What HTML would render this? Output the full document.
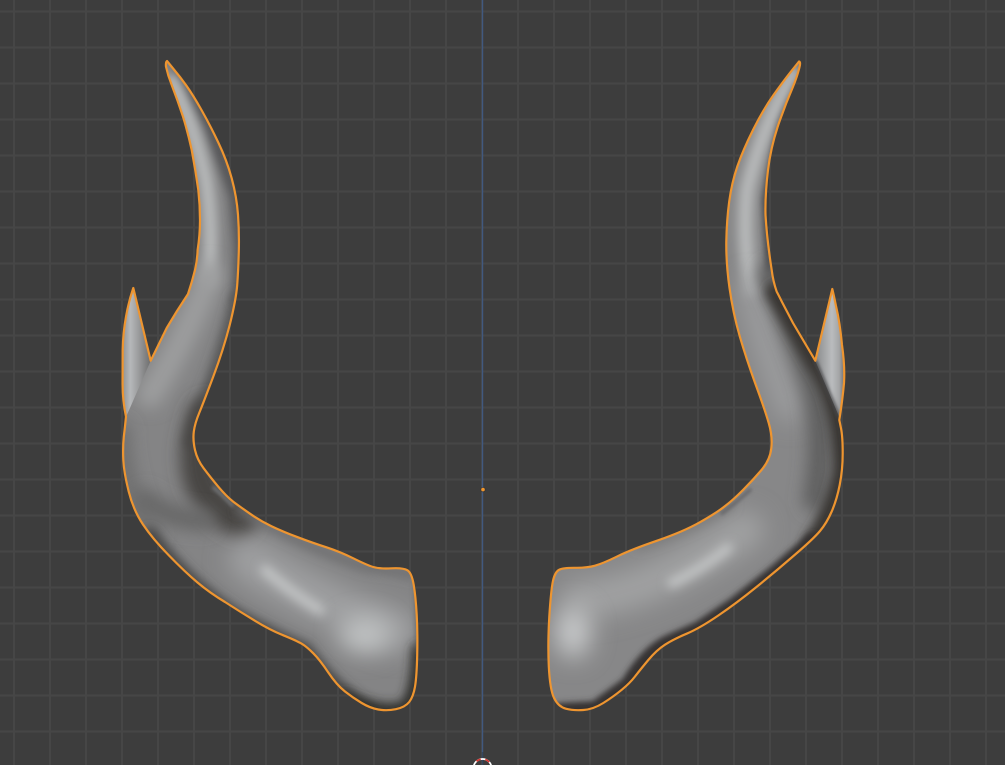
<!DOCTYPE html>
<html lang="en">
<head>
<meta charset="utf-8">
<title>Horns viewport</title>
<style>
html,body{margin:0;padding:0;width:1005px;height:765px;overflow:hidden;background:#3d3d3d}
svg{display:block}
</style>
</head>
<body>
<svg xmlns="http://www.w3.org/2000/svg" width="1005" height="765" viewBox="0 0 1005 765">
<defs>
<filter id="b1" filterUnits="userSpaceOnUse" x="0" y="0" width="1005" height="765"><feGaussianBlur stdDeviation="1.5"/></filter>
<filter id="b3" filterUnits="userSpaceOnUse" x="0" y="0" width="1005" height="765"><feGaussianBlur stdDeviation="3"/></filter>
<filter id="b5" filterUnits="userSpaceOnUse" x="0" y="0" width="1005" height="765"><feGaussianBlur stdDeviation="5"/></filter>
<filter id="b8" filterUnits="userSpaceOnUse" x="0" y="0" width="1005" height="765"><feGaussianBlur stdDeviation="8"/></filter>
<filter id="b12" filterUnits="userSpaceOnUse" x="0" y="0" width="1005" height="765"><feGaussianBlur stdDeviation="12"/></filter>
<pattern id="grid" width="36" height="36" patternUnits="userSpaceOnUse" x="13" y="10.5">
<rect x="0" y="0" width="2" height="36" fill="#464646"/>
<rect x="0" y="0" width="36" height="2" fill="#464646"/>
</pattern>
<path id="L" d="M167 61L173.5 69Q180 76.7 186.5 85.8Q193 95 201.5 110Q210 125 218.3 142.5Q226.7 160 231.7 178.3Q236.7 196.7 238 214.8Q239.3 233 238.8 251.5Q238.3 270 237.2 285Q236 300 229.7 325Q223.3 350 213.3 376.5Q203.3 403 199.2 413Q195 423 193.8 431.5Q192.7 440 195 450Q197.3 460 203.7 468.3Q210 476.7 218.3 486.7Q226.7 496.7 233.3 501.7Q240 506.7 250 513.7Q260 520.7 271.5 526.2Q283 531.7 298 537.3Q313 543 326.5 547.3Q340 551.7 353.3 558.3Q366.7 565 373.3 567Q380 569 391.7 568.3Q403.3 567.7 407.5 570.3Q411.7 573 413.7 584.8Q415.7 596.7 416.7 614.8Q417.7 633 417.2 654.8Q416.7 676.7 415 686.7Q413.3 696.7 409.2 702Q405 707.3 395.8 709.2Q386.7 711 378.3 709.5Q370 708 361.7 703Q353.3 698 345 691.5Q336.7 685 328.3 672.5Q320 660 313.3 653.3Q306.7 646.7 301.7 643.7Q296.7 640.7 283.3 635.3Q270 630 255 620.8Q240 611.7 225 602Q210 593 197.5 582.5Q185 572 169 555.5Q152.7 539 143 524.5Q133.3 510 128.7 491.5Q124 473 123.3 460Q122.7 446.7 123.8 436.7Q125 426.7 126 416.7Q122.5 400 122.6 383Q122.7 366 122.7 350Q123 333 126 316.7Q128.5 302 133.3 288L150.7 360.7L166.7 328L177 311L188 294Q192 282 195 270Q197.3 260 197.6 250Q200 235 200 220Q200 205 198.3 190Q195.5 170 191.7 150Q188 133 183 116.7Q177.5 100 171.7 85Q168 76 166 66.7Q165.5 62 167 61Z"/>
<path id="R" d="M799 61.5L791 71.6Q783 81.7 773 95.8Q763 110 753 130Q743 150 737.3 166.5Q731.7 183 729.2 201.5Q726.7 220 726.3 241.5Q726 263 729.5 288Q733 313 739.8 336.5Q746.7 360 755.8 385Q765 410 768.8 423.3Q772.7 436.7 771.3 448.3Q770 460 761.5 470Q753 480 743 490Q733 500 724.8 506.3Q716.7 512.7 700 522.2Q683.3 531.7 656.7 540.8Q630 550 616.7 556.7Q603.3 563.3 595 565.7Q586.7 568 575 567.8Q563.3 567.7 559.2 569.7Q555 571.7 553 580.8Q551 590 549.3 616.5Q547.7 643 548.8 666.5Q550 690 554.2 698.3Q558.3 706.7 565.8 708.7Q573.3 710.7 583.3 710Q593.3 709.3 603.3 703Q613.3 696.7 621.7 689.8Q630 683 635 676.5Q640 670 648.3 660Q656.7 650 665 644.7Q673.3 639.3 686.7 633.7Q700 628 718.3 615.5Q736.7 603 755.8 587.5Q775 572 794 555.5Q813.3 539 820 531Q826.7 523 831.7 511.5Q836.7 500 839.7 485Q842.7 470 842.7 453.3Q842.7 436.7 841 428.3L839.3 420Q842.5 400 844 383Q845 366 842 345Q840 323 836 306Q834 296 832.3 289L815.3 360.7L793 323L782 302Q777.5 293 776.7 291.7Q773 281 771.7 270Q767 240 765.5 215Q765 195 768 170Q771 145 780 120Q786 103 793 86.7Q797 77 799.3 68Q801 62 799 61.5Z"/>
<clipPath id="cL"><use href="#L"/></clipPath>
<clipPath id="cR"><use href="#R"/></clipPath>
<linearGradient id="spL" gradientUnits="userSpaceOnUse" x1="122" y1="0" x2="150" y2="0">
<stop offset="0" stop-color="#8f9091"/><stop offset=".3" stop-color="#b6b8ba"/><stop offset=".6" stop-color="#9a9b9c"/><stop offset="1" stop-color="#707071"/>
</linearGradient>
<linearGradient id="spR" gradientUnits="userSpaceOnUse" x1="816" y1="0" x2="845" y2="0">
<stop offset="0" stop-color="#8b8c8d"/><stop offset=".55" stop-color="#babcbe"/><stop offset=".8" stop-color="#a4a5a6"/><stop offset="1" stop-color="#6c6c6d"/>
</linearGradient>
</defs>

<rect width="1005" height="765" fill="#3d3d3d"/>
<rect width="1005" height="765" fill="url(#grid)"/>

<!-- axis line -->
<rect x="481.8" y="0" width="1.4" height="752" fill="#41597f"/>
<rect x="481.8" y="752" width="1.4" height="13" fill="#34465f"/>

<!-- left horn -->
<g clip-path="url(#cL)">
<rect x="110" y="50" width="320" height="670" fill="#848485"/>
<g fill="none" stroke-linecap="round" stroke-linejoin="round">
<path d="M178 72L210 125L236 196L241 250L238 300" stroke="#505051" stroke-width="12" filter="url(#b5)"/>
<path d="M172 80Q194 125 206 180Q214 235 208 280" stroke="#b7b9ba" stroke-width="14" filter="url(#b5)"/>
<path d="M210 275Q185 340 150 395" stroke="#9c9d9e" stroke-width="26" filter="url(#b8)"/>
<path d="M238 300Q226 350 206 400Q195 424 192 442" stroke="#555555" stroke-width="16" filter="url(#b5)"/>
<path d="M206 415Q192 455 203 485Q218 510 240 520" stroke="#474442" stroke-width="36" filter="url(#b8)"/>
<path d="M122 430Q122 485 152 535" stroke="#6d6d6d" stroke-width="16" filter="url(#b8)"/>
<path d="M145 500Q170 520 205 520" stroke="#686868" stroke-width="22" filter="url(#b8)"/>
<path d="M250 560Q320 605 395 630" stroke="#9e9fa0" stroke-width="44" filter="url(#b12)"/>
<path d="M240 510Q300 545 365 567Q395 570 414 575" stroke="#6c6c6d" stroke-width="8" filter="url(#b5)"/>
<path d="M150 535Q190 588 240 618Q280 640 305 650Q335 690 370 713" stroke="#444444" stroke-width="15" filter="url(#b5)"/>
<path d="M345 698Q380 716 406 708Q418 692 419 650" stroke="#2f2e2c" stroke-width="15" filter="url(#b5)"/>
<path d="M419 585L420 650" stroke="#5c5c5c" stroke-width="7" filter="url(#b3)"/>
<path d="M265 570Q290 592 320 610" stroke="#c2c4c5" stroke-width="10" filter="url(#b5)"/>
<ellipse cx="365" cy="635" rx="26" ry="18" fill="#c0c2c3" stroke="none" filter="url(#b12)"/>
<path d="M232 505L222 495L214 488" stroke="#6c6d70" stroke-width="4" filter="url(#b1)"/>
</g>
<path d="M133.3 288L150.7 360.7L126 417L120 383L120 350L126 316Z" fill="url(#spL)"/>
</g>
<use href="#L" fill="none" stroke="#ee9530" stroke-width="2.2" stroke-linejoin="round"/>

<!-- right horn -->
<g clip-path="url(#cR)">
<rect x="540" y="50" width="320" height="670" fill="#878788"/>
<g fill="none" stroke-linecap="round" stroke-linejoin="round">
<path d="M799 68L780 120L766 200L770 270" stroke="#4c4c4d" stroke-width="9" filter="url(#b3)"/>
<path d="M795 72Q762 125 747 190Q742 240 752 290" stroke="#b7b9ba" stroke-width="15" filter="url(#b5)"/>
<path d="M752 290Q765 350 790 410" stroke="#9e9fa0" stroke-width="24" filter="url(#b12)"/>
<path d="M770 275Q800 340 815 390Q826 440 815 500" stroke="#5e5e5e" stroke-width="24" filter="url(#b8)"/>
<path d="M776 292L815 362Q842 400 843 470Q836 510 813 542" stroke="#373533" stroke-width="20" filter="url(#b5)"/>
<path d="M580 600Q650 595 745 530" stroke="#a0a1a2" stroke-width="38" filter="url(#b12)"/>
<path d="M813 543L775 576L737 606L700 631L673 643Q650 652 630 686L596 711L560 713" stroke="#353230" stroke-width="20" filter="url(#b3)"/>
<path d="M730 505Q690 530 640 545" stroke="#7a7a7a" stroke-width="8" filter="url(#b5)"/>
<path d="M672 583Q700 570 728 548" stroke="#c2c4c5" stroke-width="10" filter="url(#b5)"/>
<ellipse cx="573" cy="632" rx="18" ry="26" fill="#c6c8c9" stroke="none" filter="url(#b12)"/>
<path d="M750 490L735 503L722 513" stroke="#6a6b6d" stroke-width="4" filter="url(#b1)"/>
</g>
<path d="M832.3 289L815.3 360.7L839.3 417L846 383L846 350L840 323Z" fill="url(#spR)"/>
<path d="M815.3 360.7L839.3 417" fill="none" stroke="#4a494c" stroke-width="3" filter="url(#b1)"/>
</g>
<use href="#R" fill="none" stroke="#ee9530" stroke-width="2.2" stroke-linejoin="round"/>

<!-- origin dot -->
<circle cx="483" cy="489.6" r="2.6" fill="#2d2d2d" opacity=".55"/>
<circle cx="483" cy="489.6" r="1.8" fill="#f0962e"/>

<!-- 3D cursor -->
<circle cx="482.5" cy="768" r="9" fill="none" stroke="#ffffff" stroke-width="1.7"/>
<circle cx="482.5" cy="768" r="9" fill="none" stroke="#d8342f" stroke-width="1.7" stroke-dasharray="4.7 4.7" stroke-dashoffset="2"/>
</svg>
</body>
</html>
